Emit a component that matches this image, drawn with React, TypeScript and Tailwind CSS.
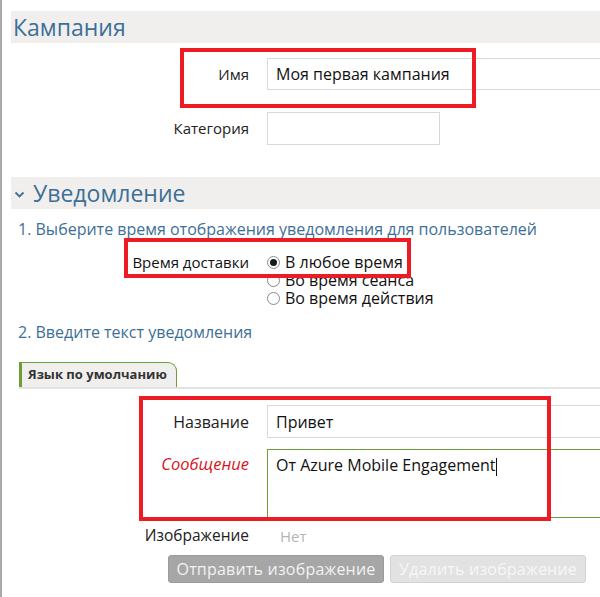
import React from 'react';

const font = { fontFamily: '"Open Sans", "Noto Sans", sans-serif' };

const Radio: React.FC<{ checked?: boolean; label: string }> = ({ checked, label }) => (
  <div className="flex items-center h-[18px]">
    <span className="w-[13px] h-[13px] rounded-full border border-[#8a8a8a] bg-white flex items-center justify-center mr-[5px] shrink-0">
      {checked && <span className="w-[7px] h-[7px] rounded-full bg-[#1a1a1a]" />}
    </span>
    <span className="text-[16px] text-[#111] leading-[18px] whitespace-nowrap">{label}</span>
  </div>
);

export default function App() {
  return (
    <div className="relative w-[600px] h-[597px] overflow-hidden bg-white" style={font}>
      <div className="h-full border-l-2 border-[#a9a9a9] pl-[9px] pt-[11px]">
        {/* Кампания */}
        <div className="h-[32px] bg-[#f0efee] flex items-center pl-[2px]">
          <span className="text-[23px] text-[#3d6f97] leading-none">Кампания</span>
        </div>

        <div className="grid grid-cols-[238px_1fr] gap-x-[18px] mt-[15px] items-center">
          <div className="text-right text-[15px] text-[#222]">Имя</div>
          <div className="h-[32px] w-[340px] border border-[#d9d9d9] flex items-center pl-[8px] text-[16px] text-[#111]">
            Моя первая кампания
          </div>
          <div className="text-right text-[15px] text-[#222] mt-[22px]">Категория</div>
          <div className="h-[33px] w-[173px] border border-[#d9d9d9] mt-[22px]" />
        </div>

        {/* Уведомление */}
        <div className="h-[32px] bg-[#f0efee] flex items-center pl-[3px] mt-[32px]">
          <svg width="11" height="8" viewBox="0 0 11 8" className="mr-[8px] mt-[3px]">
            <path d="M1.5 1.5 L5.5 5.5 L9.5 1.5" fill="none" stroke="#3d6f97" strokeWidth="1.8" />
          </svg>
          <span className="text-[23px] text-[#3d6f97] leading-none">Уведомление</span>
        </div>

        <div className="mt-[10px] pl-[7px] text-[16px] text-[#3d6f97] leading-[20px] whitespace-nowrap">
          1. Выберите время отображения уведомления для пользователей
        </div>

        <div className="grid grid-cols-[238px_1fr] gap-x-[18px] mt-[14px]">
          <div className="text-right text-[15px] text-[#111] leading-[18px] whitespace-nowrap">Время доставки</div>
          <div className="flex flex-col">
            <Radio checked label="В любое время" />
            <Radio label="Во время сеанса" />
            <Radio label="Во время действия" />
          </div>
        </div>

        <div className="mt-[15px] pl-[7px] text-[16px] text-[#3d6f97] leading-[20px]">
          2. Введите текст уведомления
        </div>

        {/* Tab */}
        <div className="mt-[20px] ml-[8px] border-b-2 border-[#e3e3e3] flex">
          <div className="h-[25px] w-[158px] bg-[#f0efee] border-l-[3px] border-t border-r border-[#6b9f36] rounded-tr-[9px] flex items-center pl-[6px] text-[13px] font-bold text-[#333] whitespace-nowrap">
            Язык по умолчанию
          </div>
        </div>

        <div className="grid grid-cols-[238px_1fr] gap-x-[18px] mt-[16px]">
          <div className="text-right text-[16px] text-[#222] flex items-center justify-end h-[33px]">Название</div>
          <div className="h-[33px] w-[340px] border border-[#d9d9d9] flex items-center pl-[8px] text-[16px] text-[#111]">
            Привет
          </div>
          <div className="text-right text-[16.5px] italic text-[#d9141c] mt-[11px] pt-[3px]">Сообщение</div>
          <div className="h-[69px] w-[340px] border border-[#6b9f36] mt-[11px] pl-[8px] pt-[3px] text-[16px] text-[#111] whitespace-nowrap">
            От Azure Mobile Engagement<span className="inline-block w-px h-[18px] bg-[#111] align-middle" />
          </div>
          <div className="text-right text-[15.5px] text-[#222] mt-[6px]">Изображение</div>
          <div className="mt-[7px] pl-[13px] text-[15px] text-[#b5b5b5]">Нет</div>
        </div>

        <div className="flex mt-[7px] pl-[157px] gap-[6px]">
          <div className="h-[28px] w-[216px] rounded-[3px] bg-[#a6a6a6] border border-[#9b9b9b] flex items-center justify-center text-[16px] tracking-[0.2px] text-[#f2f2f2] whitespace-nowrap">
            Отправить изображение
          </div>
          <div className="h-[28px] w-[196px] rounded-[3px] bg-[#e2e2e2] border border-[#d2d2d2] flex items-center justify-center text-[16px] tracking-[0.2px] text-[#f7f7f7] whitespace-nowrap">
            Удалить изображение
          </div>
        </div>
      </div>

      {/* red annotation boxes */}
      <div className="absolute left-[180px] top-[48px] w-[296px] h-[60px] border-4 border-[#ed1c24]" />
      <div className="absolute left-[124px] top-[238px] w-[287px] h-[40px] border-4 border-[#ed1c24]" />
      <div className="absolute left-[139px] top-[396px] w-[412px] h-[125px] border-4 border-[#ed1c24]" />
    </div>
  );
}
